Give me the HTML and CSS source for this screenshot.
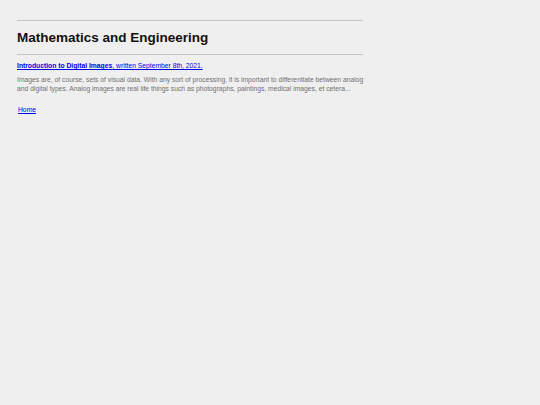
FILE: index.html
```html
<!DOCTYPE html>
<html>
<head>
<meta charset="utf-8">
<link rel="stylesheet" href="styles.css">
</head>
<body>
<div class="page">
  <hr class="rule">
  <h1 class="title">Mathematics and Engineering</h1>
  <hr class="rule">
  <div class="post">
    <a class="post-link" href="#"><b>Introduction to Digital Images</b>, written September 8th, 2021.</a>
    <p class="excerpt">Images are, of course, sets of visual data. With any sort of processing, it is important to differentiate between analog and digital types. Analog images are real life things such as photographs, paintings, medical images, et cetera...</p>
  </div>
  <a class="home" href="#">Home</a>
</div>
</body>
</html>
```
FILE: styles.css
```css
html, body {
  margin: 0;
  padding: 0;
  background: #efefef;
}
body {
  font-family: "Liberation Sans", Arial, sans-serif;
}
.page {
  width: 346px;
  padding: 20px 0 0 17px;
}
.rule {
  border: 0;
  border-top: 1px solid #c4c4c4;
  margin: 0;
  height: 0;
}
.title {
  font-size: 13.5px;
  font-weight: bold;
  color: #111;
  margin: 9px 0 8px;
  line-height: 16px;
}
.post {
  padding-top: 7px;
}
.post-link {
  font-size: 6.75px;
  color: #0000ee;
  line-height: 8px;
  display: block;
}
.excerpt {
  font-size: 6.75px;
  color: #707070;
  line-height: 8.5px;
  margin: 6px -5px 0 0;
}
.home {
  display: inline-block;
  margin: 13px 0 0 1px;
  font-size: 6.75px;
  line-height: 8px;
  color: #0000ee;
}
```
